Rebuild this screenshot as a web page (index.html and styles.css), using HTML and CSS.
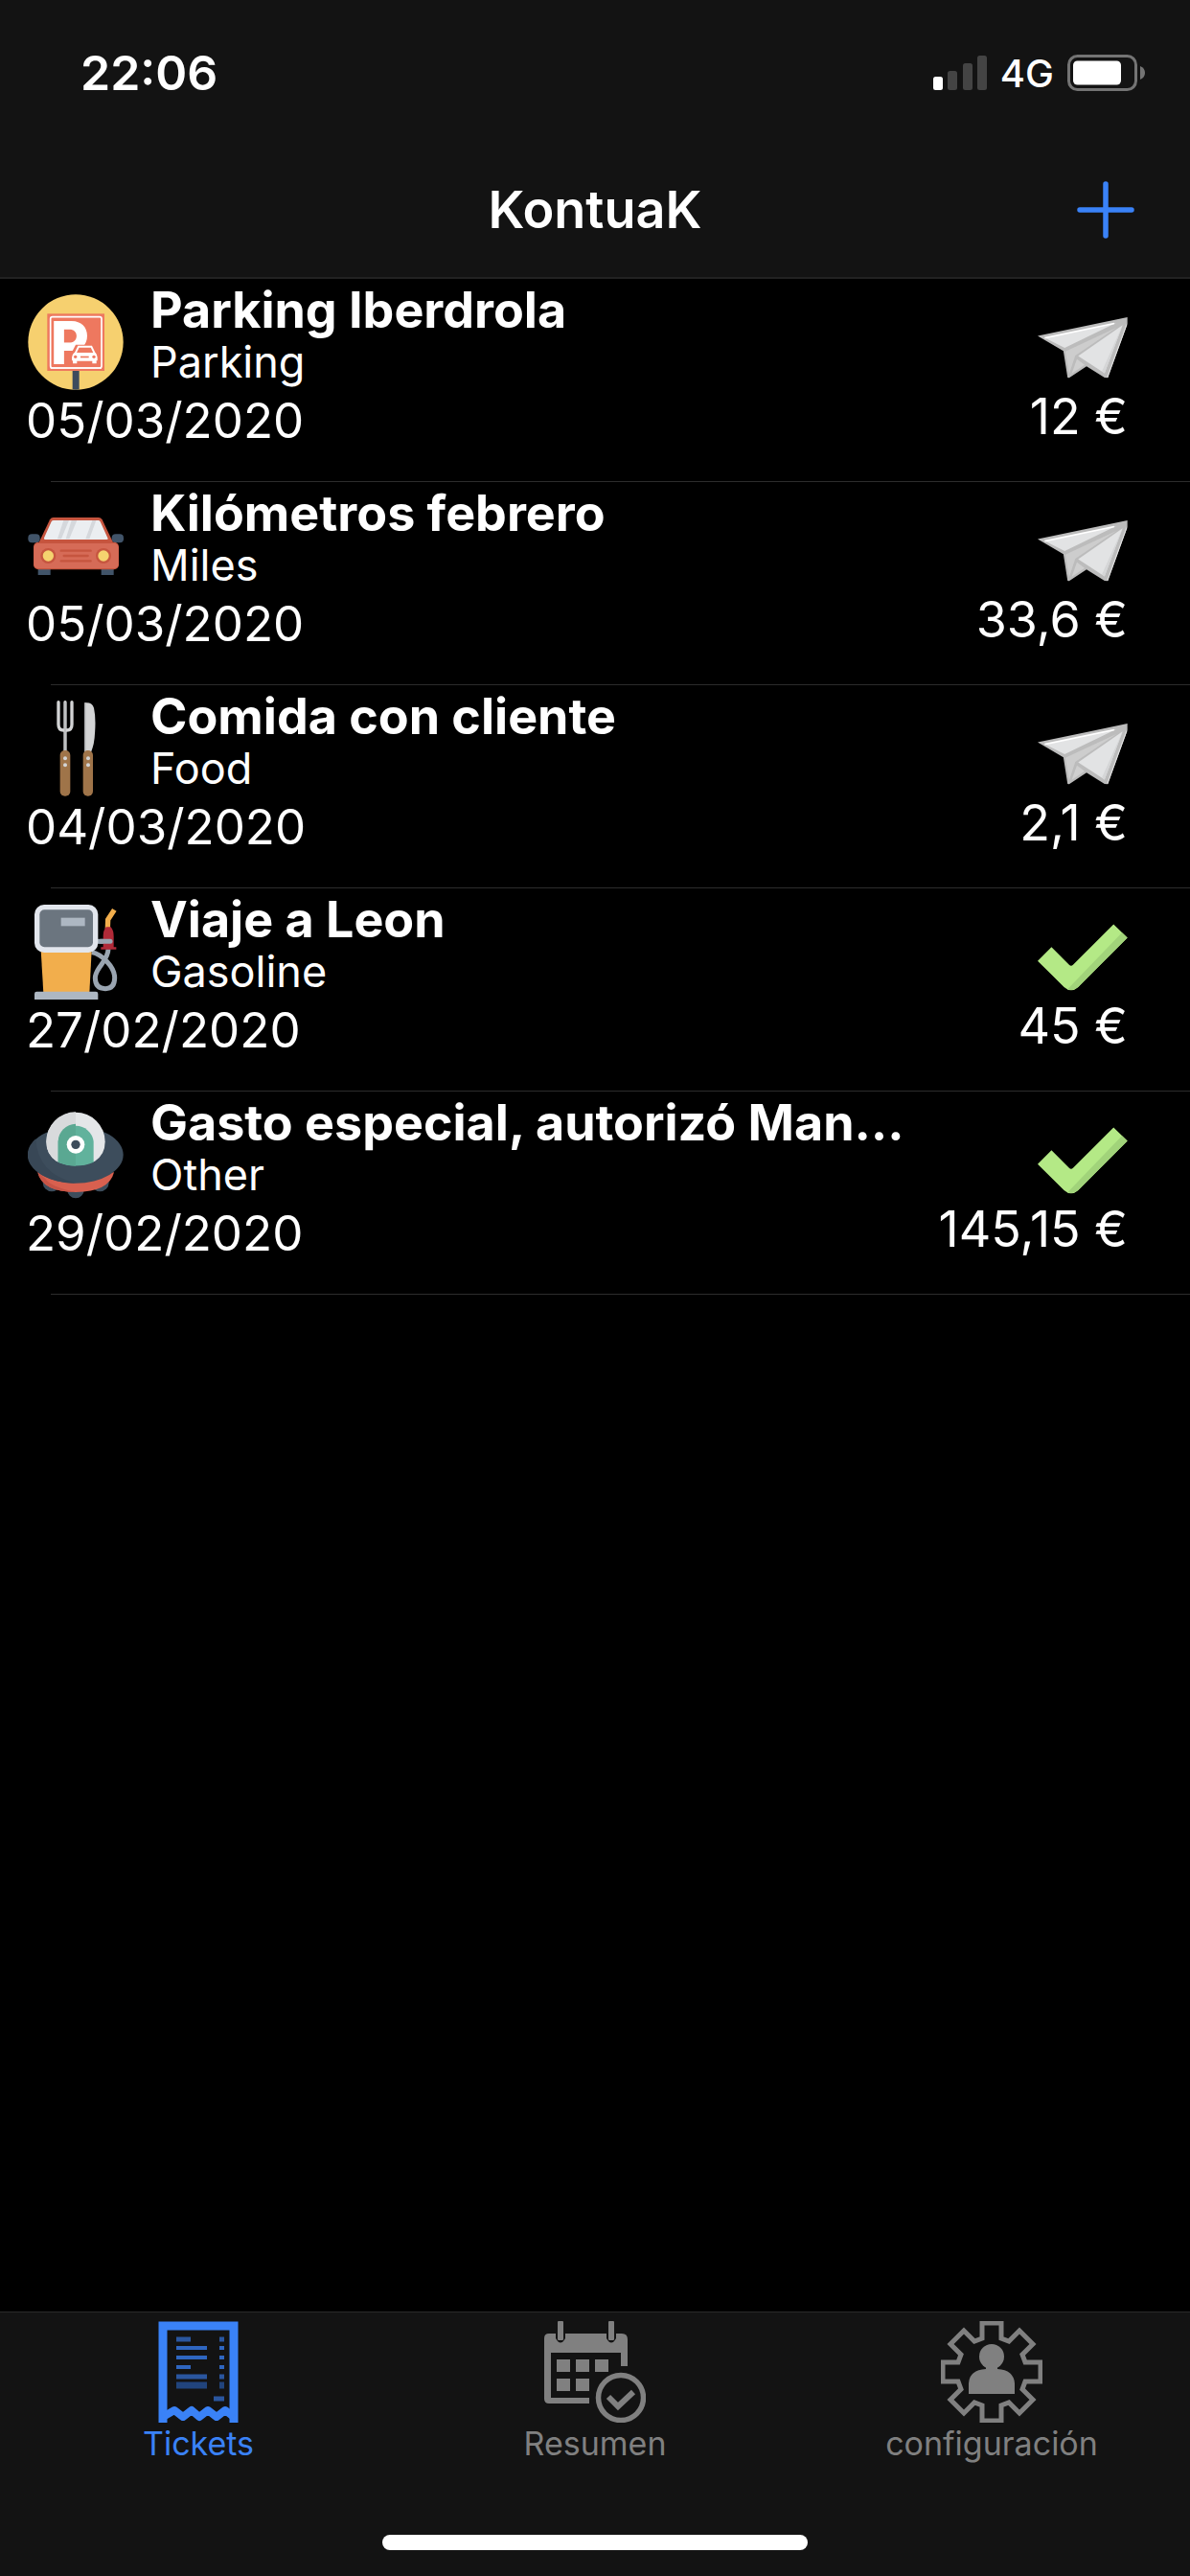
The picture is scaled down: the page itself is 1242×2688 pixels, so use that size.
FILE: index.html
```html
<!DOCTYPE html>
<html lang="es">
<head>
    <meta charset="UTF-8">
    <meta name="viewport" content="width=device-width, initial-scale=1.0">
    <title>KontuaK</title>
    <link rel="stylesheet" href="styles.css">
</head>
<body>
    <!-- shared status icons -->
    <svg class="symbols" aria-hidden="true">
        <symbol id="plane" viewBox="0 0 280 190">
            <path fill="#bcbcbc" d="M0 58 L279 0 L279 20 L218 188 L208 187 L152 152 L98 188 L93 187 L80 105Z"/>
            <path fill="#e2e3e4" d="M22 64 L245 17 L84 95Z"/>
            <path fill="none" stroke="#fff" stroke-width="5" d="M22 64 L238 19"/>
            <path fill="#cdcdcd" d="M86 106 L246 32 L117 119 L98 176Z"/>
            <path fill="#cfcfcf" d="M122 130 L146 148 L106 175Z"/>
            <path fill="#e2e3e4" d="M126 120 L264 24 L208 174Z"/>
            <path fill="#d5d6d7" d="M264 24 L208 174 L200 167Z"/>
            <path fill="none" stroke="#e5e5e5" stroke-width="3" d="M277 22 L217 187"/>
        </symbol>
        <symbol id="check" viewBox="0 0 280 206">
            <path fill="#b4e986" d="M0 114 L43 71 L98 126 Q104 132 110 126 L236 0 L279 42 L126 195 Q104 215 82 195Z"/>
            <path fill="#a1d37a" d="M262 26 L279 42 L126 195 Q111 209 93 202Z"/>
        </symbol>
    </svg>

    <header class="header">
        <div class="status-bar">
            <span class="clock">22:06</span>
            <div class="status-right">
                <svg class="signal" viewBox="0 0 56 36" aria-hidden="true">
                    <rect x="0" y="22" width="10" height="14" rx="2.5" fill="#fff"/>
                    <rect x="15" y="16" width="10" height="20" rx="2.5" fill="#444"/>
                    <rect x="31" y="8" width="10" height="28" rx="2.5" fill="#444"/>
                    <rect x="46" y="0" width="10" height="36" rx="2.5" fill="#444"/>
                </svg>
                <span class="network">4G</span>
                <svg class="battery" viewBox="0 0 82 38" aria-hidden="true">
                    <rect x="1.5" y="1.5" width="70" height="35" rx="9" fill="none" stroke="#747474" stroke-width="3"/>
                    <rect x="6" y="6.5" width="50" height="25" rx="4.5" fill="#fff"/>
                    <path d="M76 12 Q81 14 81 19 Q81 24 76 26Z" fill="#747474"/>
                </svg>
            </div>
        </div>
        <div class="nav-bar">
            <h1>KontuaK</h1>
            <button class="add-btn" type="button" aria-label="Add">
                <svg viewBox="0 0 60 60" aria-hidden="true">
                    <path d="M30 3 V57 M3 30 H57" stroke="#3a82f7" stroke-width="5.5" stroke-linecap="round"/>
                </svg>
            </button>
        </div>
    </header>

    <main class="content">
        <ul class="tickets">
            <li class="ticket">
                <div class="left">
                    <div class="info">
                        <svg class="type-icon" viewBox="0 0 300 300" aria-hidden="true">
                            <circle cx="150" cy="150" r="149" fill="#f6d06f"/>
                            <path d="M140 235 H161 V298 Q150 300 140 298Z" fill="#3c4b5d"/>
                            <rect x="61" y="61" width="179" height="179" fill="#ee785f"/>
                            <rect x="71" y="71" width="160" height="160" rx="6" fill="none" stroke="#fff" stroke-width="5"/>
                            <text x="71" y="218" class="sign-letter">P</text>
                            <path d="M134 238 V190 L150 158 H208 L224 190 V222 H134Z" fill="#ee785f"/>
                            <path d="M71 231 H231" stroke="#fff" stroke-width="5"/>
                            <path d="M149 185 L159 164 H199 L209 185" fill="none" stroke="#fff" stroke-width="6"/>
                            <path fill="#fff" d="M145 183 H212 Q218 190 218 198 V208 H215 V217 H202 V209 H154 V217 H141 V208 H138 V198 Q138 190 145 183Z"/>
                            <circle cx="149" cy="196" r="5" fill="#ee785f"/>
                            <circle cx="207" cy="196" r="5" fill="#ee785f"/>
                            <rect x="165" y="194" width="26" height="5" fill="#ee785f"/>
                        </svg>
                        <div class="text">
                            <h2>Parking Iberdrola</h2>
                            <p>Parking</p>
                        </div>
                    </div>
                    <time datetime="2020-03-05">05/03/2020</time>
                </div>
                <div class="right">
                    <svg class="state-icon" aria-hidden="true"><use href="#plane"/></svg>
                    <span class="amount">12 €</span>
                </div>
            </li>
            <li class="ticket">
                <div class="left">
                    <div class="info">
                        <svg class="type-icon" viewBox="0 0 300 300" aria-hidden="true">
                            <rect x="32" y="215" width="39" height="28" fill="#415469"/>
                            <rect x="230" y="215" width="39" height="28" fill="#415469"/>
                            <rect x="1" y="115" width="37" height="27" rx="12" fill="#415469"/>
                            <rect x="263" y="115" width="37" height="27" rx="12" fill="#415469"/>
                            <path d="M34 143 L69 70 Q73 63 80 63 H221 Q229 63 233 70 L268 143Z" fill="#c6553f"/>
                            <path d="M51 127 L74 76 Q76 72 81 72 H220 Q225 72 227 76 L250 127 Q253 132 247 132 H55 Q49 132 51 127Z" fill="#ebeef1"/>
                            <path d="M112 72 H129 L105 130 H93Z M137 72 H154 L130 130 H119Z M202 72 H214 L193 130 H181Z" fill="#d5d8dc"/>
                            <rect x="18" y="140" width="267" height="86" rx="15" fill="#c6553f"/>
                            <rect x="19" y="144" width="265" height="78" rx="13" fill="#d66b57"/>
                            <circle cx="64" cy="183" r="24" fill="#c6553f"/>
                            <circle cx="237" cy="183" r="24" fill="#c6553f"/>
                            <circle cx="64" cy="183" r="17" fill="#f5d36f"/>
                            <circle cx="237" cy="183" r="17" fill="#f5d36f"/>
                            <path d="M104 167 H197 M113 183 H188 M104 199 H197" stroke="#c6553f" stroke-width="7" stroke-linecap="round"/>
                        </svg>
                        <div class="text">
                            <h2>Kilómetros febrero</h2>
                            <p>Miles</p>
                        </div>
                    </div>
                    <time datetime="2020-03-05">05/03/2020</time>
                </div>
                <div class="right">
                    <svg class="state-icon" aria-hidden="true"><use href="#plane"/></svg>
                    <span class="amount">33,6 €</span>
                </div>
            </li>
            <li class="ticket">
                <div class="left">
                    <div class="info">
                        <svg class="type-icon" viewBox="0 0 300 300" aria-hidden="true">
                            <path d="M96 5 V75 Q96 93 112 93 H122 Q138 93 138 75 V5 M117 5 V165" fill="none" stroke="#d3d4d5" stroke-width="10" stroke-linecap="round"/>
                            <path d="M117 5 V165" stroke="#babcbe" stroke-width="5"/>
                            <path d="M178 7 Q201 4 207 23 Q214 55 210 103 Q209 135 198 162 H178Z" fill="#d3d4d5"/>
                            <path d="M180 7 V160" stroke="#babcbe" stroke-width="4"/>
                            <rect x="101" y="156" width="32" height="143" rx="15" fill="#9f7449"/>
                            <rect x="173" y="156" width="31" height="143" rx="15" fill="#9f7449"/>
                            <g fill="#d3d4d5">
                                <circle cx="117" cy="181" r="6"/>
                                <circle cx="117" cy="202" r="6"/>
                                <circle cx="189" cy="181" r="6"/>
                                <circle cx="189" cy="202" r="6"/>
                            </g>
                        </svg>
                        <div class="text">
                            <h2>Comida con cliente</h2>
                            <p>Food</p>
                        </div>
                    </div>
                    <time datetime="2020-03-04">04/03/2020</time>
                </div>
                <div class="right">
                    <svg class="state-icon" aria-hidden="true"><use href="#plane"/></svg>
                    <span class="amount">2,1 €</span>
                </div>
            </li>
            <li class="ticket">
                <div class="left">
                    <div class="info">
                        <svg class="type-icon" viewBox="0 0 300 300" aria-hidden="true">
                            <path d="M215 118 H260" stroke="#9aa5b1" stroke-width="15"/>
                            <path d="M200 152 C232 158 272 198 272 232 Q272 266 243 266 Q211 266 211 232 C211 200 252 180 252 142" fill="none" stroke="#9aa5b1" stroke-width="15"/>
                            <path d="M271 19 L251 50 L250 78" fill="none" stroke="#f2ae4c" stroke-width="16"/>
                            <path d="M245 73 H260 Q269 84 269 102 V136 H277 V143 H229 V136 H236 V102 Q236 84 245 73Z" fill="#b02a38"/>
                            <path d="M228 118 H258" stroke="#9aa5b1" stroke-width="15" stroke-linecap="round"/>
                            <path d="M41 145 H200 L193 280 H49Z" fill="#f2ae4c"/>
                            <rect x="21" y="3" width="199" height="150" rx="30" fill="#e2e6ed"/>
                            <rect x="37" y="19" width="167" height="117" rx="15" fill="#6b757f"/>
                            <rect x="104" y="44" width="75" height="26" fill="#adb7c2"/>
                            <path d="M21 282 Q21 275 28 275 H213 Q220 275 220 282 V300 H21Z" fill="#adb7c2"/>
                        </svg>
                        <div class="text">
                            <h2>Viaje a Leon</h2>
                            <p>Gasoline</p>
                        </div>
                    </div>
                    <time datetime="2020-02-27">27/02/2020</time>
                </div>
                <div class="right">
                    <svg class="state-icon" aria-hidden="true"><use href="#check"/></svg>
                    <span class="amount">45 €</span>
                </div>
            </li>
            <li class="ticket">
                <div class="left">
                    <div class="info">
                        <svg class="type-icon" viewBox="0 0 300 300" aria-hidden="true">
                            <circle cx="75" cy="237" r="28" fill="#3d4d5c"/>
                            <circle cx="226" cy="237" r="28" fill="#3d4d5c"/>
                            <circle cx="150" cy="260" r="26" fill="#3d4d5c"/>
                            <path d="M31 205 Q45 266 150 267 Q255 266 270 205Z" fill="#d8604f"/>
                            <path d="M31 205 Q45 266 150 267 Q70 250 55 225Z" fill="#c75446"/>
                            <ellipse cx="150" cy="150" rx="149" ry="89" fill="#3d4d5c"/>
                            <path d="M25 100 A149 89 0 0 0 150 239 Q30 210 25 100Z" fill="#384756"/>
                            <path d="M58 109 A92 92 0 0 1 242 109 Q242 150 210 170 Q150 195 90 170 Q58 150 58 109Z" fill="#e4e6e8"/>
                            <path d="M58 109 A92 92 0 0 1 150 16 V180 Q115 182 90 170 Q58 150 58 109Z" fill="#d8dadc"/>
                            <path d="M95 108 A56 56 0 0 1 206 108 V173 Q150 196 95 173Z" fill="#61b29c"/>
                            <path d="M95 108 A56 56 0 0 1 150 53 V185 Q122 184 95 173Z" fill="#5aa892"/>
                            <circle cx="150" cy="118" r="28" fill="#fff"/>
                            <circle cx="150" cy="118" r="14" fill="#3d4d5c"/>
                        </svg>
                        <div class="text">
                            <h2>Gasto especial, autorizó Man…</h2>
                            <p>Other</p>
                        </div>
                    </div>
                    <time datetime="2020-02-29">29/02/2020</time>
                </div>
                <div class="right">
                    <svg class="state-icon" aria-hidden="true"><use href="#check"/></svg>
                    <span class="amount">145,15 €</span>
                </div>
            </li>
        </ul>
    </main>

    <footer class="footer">
        <nav class="tabs">
            <a class="tab active" href="#tickets">
                <svg viewBox="0 0 106 106" aria-hidden="true">
                    <path d="M16 106 V5 H90 V106" fill="none" stroke="currentColor" stroke-width="9"/>
                    <path d="M16 100 L28 93 L37 100 L46 93 L54 100 L63 93 L72 100 L81 93 L90 100" fill="none" stroke="currentColor" stroke-width="8" stroke-linejoin="round"/>
                    <path d="M30 28 H62 M30 38 H62 M30 48 H45 M75 28 H80 M75 38 H80 M75 48 H80" stroke="#2f66c0" stroke-width="4"/>
                    <path d="M30 19 H45 M30 58 H62 M75 19 H80 M75 58 H80 M69 81 H80" stroke="#2a569f" stroke-width="5"/>
                    <path d="M30 67 H62 M75 67 H80" stroke="#21447c" stroke-width="7"/>
                </svg>
                <span>Tickets</span>
            </a>
            <a class="tab" href="#resumen">
                <svg viewBox="0 0 106 106" aria-hidden="true">
                    <path d="M5 13 H12 V18 Q17 27 22 18 V13 H65 V18 Q70 27 75 18 V13 H81 Q87 13 87 19 V47 H80 V33 H7 V80 H47 V86 H5 Q0 86 0 81 V18 Q0 13 5 13Z" fill="currentColor"/>
                    <rect x="14" y="0" width="6" height="20" rx="1" fill="currentColor"/>
                    <rect x="67" y="0" width="6" height="20" rx="1" fill="currentColor"/>
                    <path d="M13 40 H27 V53 H13Z M33 40 H47 V53 H33Z M53 40 H67 V53 H53Z M13 60 H27 V73 H13Z M33 60 H47 V73 H33Z" fill="currentColor"/>
                    <circle cx="80" cy="80" r="23.5" fill="none" stroke="currentColor" stroke-width="5.5"/>
                    <path d="M67 79 L77 89 L93 74" fill="none" stroke="currentColor" stroke-width="6"/>
                </svg>
                <span>Resumen</span>
            </a>
            <a class="tab" href="#configuracion">
                <svg viewBox="0 0 106 106" aria-hidden="true">
                    <path d="M43 2 H63 V18 L71 21 L82 10 L96 24 L85 35 L88 43 H104 V63 H88 L85 71 L96 82 L82 96 L71 85 L63 88 V104 H43 V88 L35 85 L24 96 L10 82 L21 71 L18 63 H2 V43 H18 L21 35 L10 24 L24 10 L35 21 L43 18Z" fill="none" stroke="currentColor" stroke-width="5"/>
                    <circle cx="53" cy="37" r="13" fill="currentColor"/>
                    <path d="M29 76 V65 Q30 51 47 50 V46 H59 V50 Q76 51 77 65 V76Z" fill="currentColor"/>
                </svg>
                <span>configuración</span>
            </a>
        </nav>
        <div class="home-bar"></div>
    </footer>
</body>
</html>
```
FILE: styles.css
```css
* {
    box-sizing: border-box;
}

body {
    display: flex;
    flex-direction: column;
    min-height: 100vh;
    margin: 0;
    background-color: #000;
    color: #fff;
    font-family: Inter, "Liberation Sans", sans-serif;
}

h1,
h2,
p,
ul {
    margin: 0;
    padding: 0;
}

.symbols {
    display: none;
}

.header {
    background-color: #131313;
    border-bottom: 2px solid #222;
}

.status-bar {
    display: flex;
    justify-content: space-between;
    align-items: center;
    height: 152px;
    padding: 0 46px 0 84px;
}

.clock {
    font-size: 50px;
    font-weight: 600;
}

.status-right {
    display: flex;
    align-items: center;
    gap: 14px;
}

.signal {
    width: 56px;
    height: 36px;
}

.network {
    font-size: 40px;
    font-weight: 500;
}

.battery {
    width: 82px;
    height: 38px;
}

.nav-bar {
    display: grid;
    grid-template-columns: 1fr auto 1fr;
    align-items: center;
    height: 137px;
    padding: 0 58px 4px;
}

.nav-bar h1 {
    grid-column: 2;
    font-size: 54px;
    font-weight: 600;
}

.add-btn {
    justify-self: end;
    width: 60px;
    height: 60px;
    padding: 0;
    border: none;
    background: none;
    cursor: pointer;
}

.add-btn svg {
    display: block;
}

.content {
    flex: 1;
}

.tickets {
    list-style: none;
}

.ticket {
    display: flex;
    justify-content: space-between;
    position: relative;
    padding: 4px 65px 32px 27px;
}

/* inset separator */
.ticket::after {
    content: "";
    position: absolute;
    left: 53px;
    right: 0;
    bottom: 0;
    height: 1px;
    background-color: #2c2c2c;
}

.info {
    display: flex;
    gap: 28px;
    height: 112px;
    padding-left: 2px;
}

.type-icon {
    width: 100px;
    height: 100px;
    margin-top: 12px;
}

.sign-letter {
    font-family: Inter, sans-serif;
    font-size: 185px;
    font-weight: 800;
    fill: #fff;
}

.text h2 {
    font-size: 52px;
    font-weight: 700;
    line-height: 58px;
}

.text p {
    font-size: 45px;
    line-height: 50px;
}

time,
.amount {
    display: block;
    font-size: 52px;
    line-height: 64px;
}

time {
    font-size: 51px;
}

.right {
    display: flex;
    flex-direction: column;
    align-items: flex-end;
    padding-top: 32px;
}

.state-icon {
    width: 94px;
    height: 72px;
    margin-bottom: 4px;
}

.footer {
    background-color: #131313;
    border-top: 1px solid #2a2a2a;
}

.tabs {
    display: flex;
    padding-top: 9px;
}

.tab {
    flex: 1;
    display: flex;
    flex-direction: column;
    align-items: center;
    gap: 2px;
    color: #808080;
    text-decoration: none;
}

.tab svg {
    width: 106px;
    height: 106px;
}

.tab span {
    font-size: 34px;
    line-height: 40px;
}

.active {
    color: #3a82f7;
}

.home-bar {
    width: 36%;
    max-width: 444px;
    height: 16px;
    margin: 75px auto 27px;
    border-radius: 8px;
    background-color: #fff;
}
```
